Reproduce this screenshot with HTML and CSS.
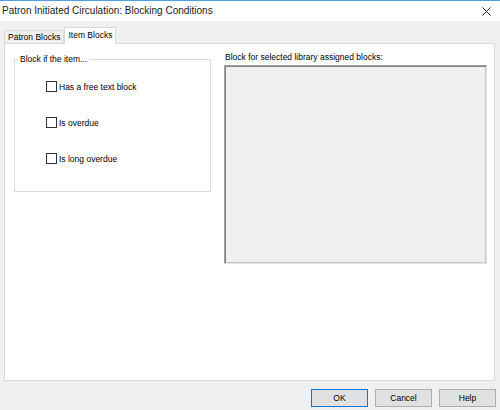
FILE: index.html
```html
<!DOCTYPE html>
<html lang="en">
<head>
<meta charset="utf-8">
<title>Patron Initiated Circulation: Blocking Conditions</title>
<link rel="stylesheet" href="styles.css">
</head>
<body>
<div class="window">
  <div class="titlebar">
    <span class="title">Patron Initiated Circulation: Blocking Conditions</span>
    <svg class="close" width="9" height="9" viewBox="0 0 9 9" aria-label="Close">
      <path d="M0.5 0.5L8.5 8.5M8.5 0.5L0.5 8.5" stroke="#2b2b2b" stroke-width="1" fill="none"/>
    </svg>
  </div>
  <div class="client">
    <div class="tabs">
      <div class="tab">Patron Blocks</div>
      <div class="tab active">Item Blocks</div>
    </div>
    <div class="panel">
      <fieldset class="group">
        <legend>Block if the item...</legend>
        <div class="checks">
          <label class="check"><span class="box"></span>Has a free text block</label>
          <label class="check"><span class="box"></span>Is overdue</label>
          <label class="check"><span class="box"></span>Is long overdue</label>
        </div>
      </fieldset>
      <div class="assigned">
        <div class="assigned-label">Block for selected library assigned blocks:</div>
        <div class="listbox"></div>
      </div>
    </div>
    <div class="buttons">
      <button class="btn default">OK</button>
      <button class="btn">Cancel</button>
      <button class="btn">Help</button>
    </div>
  </div>
</div>
</body>
</html>
```

FILE: styles.css
```css
* {
  box-sizing: border-box;
}

html, body {
  margin: 0;
  padding: 0;
  background: #f0f0f0;
}

body {
  font-family: "Liberation Sans", Arial, sans-serif;
  font-size: 8.5px;
  color: #000;
}

.window {
  width: 500px;
  height: 410px;
  display: flex;
  flex-direction: column;
  background: #f0f0f0;
}

.titlebar {
  height: 21px;
  flex: none;
  background: #fff;
  border-top: 1px solid #4f9fe3;
  display: flex;
  align-items: center;
  justify-content: space-between;
  padding: 0 9px 1px 2px;
}

.title {
  font-size: 10px;
  color: #1a1a1a;
}

.close {
  display: block;
  margin-top: 2px;
}

.client {
  flex: 1;
  display: flex;
  flex-direction: column;
}

.tabs {
  display: flex;
  align-items: flex-end;
  margin: 6px 0 0 4px;
  height: 16px;
}

.tab {
  height: 13px;
  line-height: 12px;
  padding: 0 3px;
  border: 1px solid #d9d9d9;
  border-bottom: none;
  background: #f0f0f0;
  white-space: nowrap;
}

.tab.active {
  height: 17px;
  line-height: 15px;
  padding: 0 3px;
  background: #fff;
  margin-bottom: -1px;
  position: relative;
  z-index: 1;
}

.panel {
  margin: 0 5px 0 4px;
  height: 338px;
  background: #fff;
  border: 1px solid #d9d9d9;
  display: flex;
  align-items: flex-start;
  gap: 13px;
  padding: 8px 0 0 9px;
}

.group {
  margin: 2px 0 0 0;
  width: 197px;
  border: 1px solid #dcdcdc;
  padding: 0;
  min-width: 0;
}

.group legend {
  margin-left: 3px;
  padding: 0 2px;
  line-height: 10px;
}

.checks {
  display: flex;
  flex-direction: column;
  gap: 25px;
  padding: 17px 0 27px 31px;
}

.check {
  display: flex;
  align-items: center;
  height: 11px;
  gap: 2px;
}

.box {
  width: 11px;
  height: 11px;
  border: 1px solid #333;
  background: #fff;
  flex: none;
}

.assigned {
  display: flex;
  flex-direction: column;
}

.assigned-label {
  line-height: 10px;
  padding-left: 1px;
}

.listbox {
  margin-top: 3px;
  width: 263px;
  height: 199px;
  background: #f0f0f0;
  border: 1px solid;
  border-color: #a0a0a0 #e3e3e3 #e3e3e3 #a0a0a0;
  box-shadow: inset 1px 1px 0 #828282, inset -1px -1px 0 #c8c8c8;
}

.buttons {
  display: flex;
  justify-content: flex-end;
  gap: 7px;
  margin-top: 8px;
  padding-right: 4px;
}

.btn {
  width: 57px;
  height: 18px;
  padding: 0;
  font: inherit;
  color: #000;
  background: #e1e1e1;
  border: 1px solid #adadad;
  border-radius: 0;
}

.btn.default {
  border-color: #0078d7;
}
```
